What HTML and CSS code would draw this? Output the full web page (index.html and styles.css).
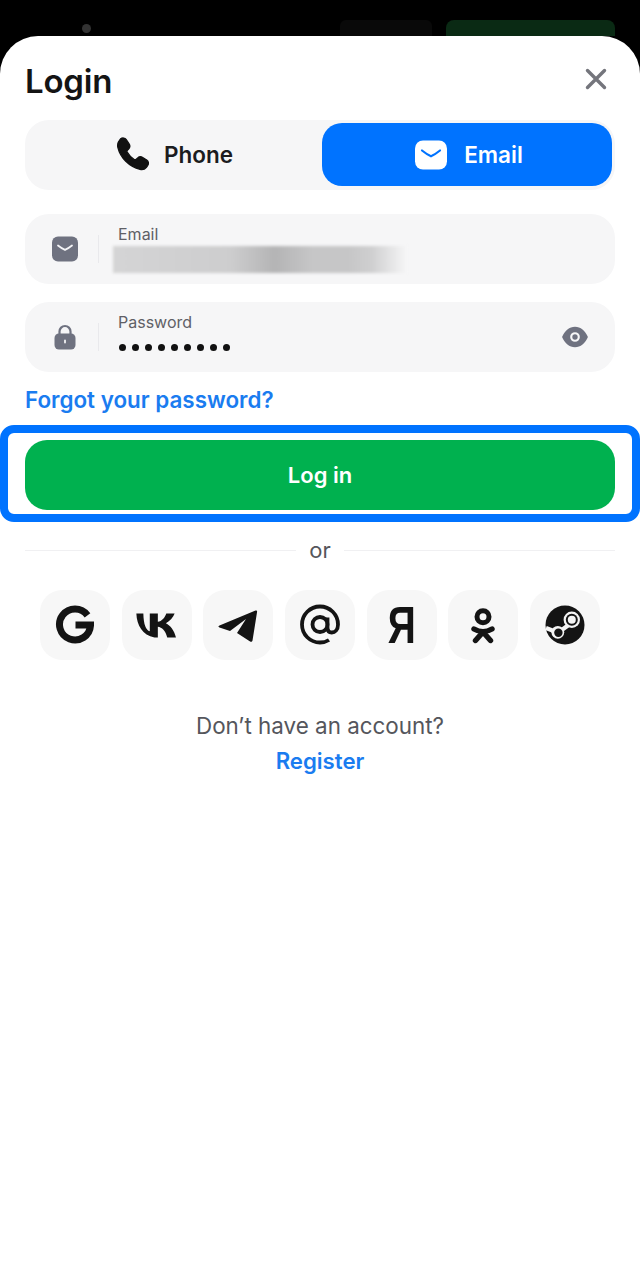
FILE: index.html
```html
<!DOCTYPE html>
<html lang="en">
<head>
    <meta charset="UTF-8">
    <meta name="viewport" content="width=device-width, initial-scale=1.0">
    <title>Login</title>
    <link rel="stylesheet" href="styles.css">
</head>
<body>
    <div class="backdrop">
        <span class="backdrop-dot"></span>
        <span class="backdrop-dark"></span>
        <span class="backdrop-green"></span>
    </div>

    <main class="sheet">
        <header class="sheet-head">
            <h1>Login</h1>
            <button class="close" aria-label="Close">
                <svg width="24" height="24" viewBox="0 0 24 24"><path d="M3.500 3.500l17 17M20.500 3.500l-17 17" stroke="#74757c" stroke-width="3.400" stroke-linecap="round" fill="none"/></svg>
            </button>
        </header>

        <div class="tabs">
            <button class="tab tab-phone">
                <svg width="36" height="36" viewBox="2 2 32 32"><path d="M7 3.600c1.600-1.100 3.900-.9 5 .8l2.500 3.800c.9 1.400.8 3.200-.4 4.400l-1.100 1.100c-.5.5-.6 1.200-.2 1.800 1.500 2.700 3.600 4.900 6.300 6.500.6.400 1.300.3 1.800-.2l1.300-1.200c1.200-1.100 3-1.300 4.400-.4l3.600 2.300c1.700 1.100 2 3.400.8 5l-1.100 1.400c-1.300 1.700-3.500 2.400-5.600 1.900C14.500 28.300 6.800 20.500 4.600 11.400 4.100 9.300 4.600 6.700 6 5z" fill="#111" stroke="#111" stroke-width="1.200" stroke-linejoin="round"/></svg>
                <span>Phone</span>
            </button>
            <button class="tab tab-active">
                <svg width="34" height="30" viewBox="0 0 34 30"><rect x="1" y="0.500" width="32" height="29" rx="8" fill="#fff"/><path d="M8 10.500c3 2.400 6 4.500 9 5.800 3-1.300 6-3.400 9-5.800" stroke="#0073ff" stroke-width="2.200" stroke-linecap="round" fill="none"/></svg>
                <span>Email</span>
            </button>
        </div>

        <div class="field">
            <div class="field-icon">
                <svg width="28" height="26" viewBox="0 0 28 26"><rect x="1" y="0.500" width="26" height="25" rx="6" fill="#6f7280"/><path d="M7 9.500c2.400 1.900 4.700 3.400 7 4.400 2.300-1 4.600-2.500 7-4.400" stroke="#f4f4f6" stroke-width="1.800" stroke-linecap="round" fill="none"/></svg>
            </div>
            <div class="field-body">
                <label>Email</label>
                <div class="blurred"></div>
            </div>
        </div>

        <div class="field">
            <div class="field-icon">
                <svg width="24" height="28" viewBox="0 0 24 28"><path d="M6.500 12V8.500a5.500 5.500 0 0 1 11 0V12" stroke="#6f7280" stroke-width="2.200" fill="none"/><rect x="1.500" y="10.500" width="21" height="16" rx="4.500" fill="#6f7280"/><rect x="11.100" y="16.500" width="1.800" height="4" rx=".9" fill="#f4f4f6"/></svg>
            </div>
            <div class="field-body">
                <label>Password</label>
                <div class="dots">
                    <i></i><i></i><i></i><i></i><i></i><i></i><i></i><i></i><i></i>
                </div>
            </div>
            <svg class="eye" width="28" height="24" viewBox="0 0 26 22"><path fill-rule="evenodd" d="M13 1.500c5.200 0 9.500 3.700 12 9.500-2.500 5.800-6.800 9.500-12 9.500S3.500 16.800 1 11C3.500 5.200 7.800 1.500 13 1.500zM13 6.500a4.500 4.500 0 1 0 0 9 4.500 4.500 0 0 0 0-9z" fill="#6f7280"/><circle cx="13" cy="11" r="2.500" fill="#6f7280"/></svg>
        </div>

        <a class="forgot" href="#">Forgot your password?</a>

        <div class="highlight">
            <button class="login">Log in</button>
        </div>

        <div class="divider"><span>or</span></div>

        <div class="socials">
            <a class="social" href="#">
                <svg width="40" height="40" viewBox="0 0 40 40"><path d="M32.500 10.300A15.500 15.500 0 1 0 35.500 20.500V20H20.500" stroke="#141414" stroke-width="7" fill="none"/></svg>
            </a>
            <a class="social" href="#">
                <svg width="47" height="47" viewBox="0 2 35 35"><path d="M2.500 10.500c.4 9 4.500 16 13.500 18h2.500v-8c3 .4 5.800 3 7 8h6.500c-1.300-5.500-4.200-9-7.500-10.700 3-1.800 5.500-4.400 6.500-7.300h-6.200c-1.100 3.200-3.400 5.800-6.300 6.200v-6.200h-6v13.300c-2.900-1-4.600-5-4.800-13.300z" fill="#141414"/></svg>
            </a>
            <a class="social" href="#">
                <svg width="40" height="40" viewBox="0 0 40 40"><path d="M1.500 20.500L37.500 5.500c1-.4 1.800.3 1.600 1.300L34.500 35.500c-.2 1.200-1.400 1.600-2.400 1L19 28l9-14-16 12-10.500-3.500c-1.400-.5-1.400-1.500 0-2z" fill="#141414"/></svg>
            </a>
            <a class="social" href="#">
                <svg width="42" height="42" viewBox="0 0 42 42"><circle cx="21" cy="20.500" r="7.500" stroke="#141414" stroke-width="3.800" fill="none"/><path d="M28.500 13.500v10c0 3.500 2 5 4.300 5 3 0 6.200-2.500 6.200-8 0-10-8-18-18-18S3 10.500 3 20.500 11 38.500 21 38.500c3.500 0 6.300-.8 9-2.500" stroke="#141414" stroke-width="3.800" fill="none"/></svg>
            </a>
            <a class="social" href="#"><span class="ya">Я</span></a>
            <a class="social" href="#">
                <svg width="40" height="40" viewBox="0 0 40 40"><circle cx="20" cy="11.700" r="6" stroke="#141414" stroke-width="5" fill="none"/><path d="M11 24c5.500 3.400 12.500 3.400 18 0M20 27l-7.500 8.500M20 27l7.500 8.500" stroke="#141414" stroke-width="5.400" stroke-linecap="round" fill="none"/></svg>
            </a>
            <a class="social" href="#">
                <svg width="40" height="40" viewBox="0 0 40 40"><circle cx="20" cy="20" r="19.500" fill="#141414"/><path d="M1 23l11 4.300M14 27l11-8" stroke="#f5f5f5" stroke-width="4.200" fill="none"/><circle cx="26.800" cy="14.700" r="8.200" fill="#f5f5f5"/><circle cx="26.800" cy="14.700" r="6" fill="#141414"/><circle cx="26.800" cy="14.700" r="4" fill="#f5f5f5"/><circle cx="12.800" cy="27.300" r="6.400" fill="#f5f5f5"/><circle cx="13.400" cy="27.800" r="4.200" fill="#141414"/></svg>
            </a>
        </div>

        <p class="no-account">Don’t have an account?</p>
        <a class="register" href="#">Register</a>
    </main>
</body>
</html>
```

FILE: styles.css
```css
* {
    box-sizing: border-box;
}
html, body {
    margin: 0;
    height: 1280px;
    overflow: hidden;
}
body {
    font-family: Inter, "Noto Sans", sans-serif;
    background-color: #000;
    color: #141414;
}
button {
    font-family: inherit;
    border: none;
    background: none;
    padding: 0;
}
a {
    text-decoration: none;
}

/* dimmed page behind the sheet */
.backdrop {
    height: 36px;
    display: flex;
    padding: 20px 25px 0 82px;
}
.backdrop-dot {
    width: 9px;
    height: 9px;
    margin-top: 4px;
    border-radius: 50%;
    background-color: #333;
}
.backdrop-dark {
    width: 92px;
    margin-left: 249px;
    border-radius: 6px 6px 0 0;
    background-color: #090909;
}
.backdrop-green {
    width: 169px;
    margin-left: 14px;
    border-radius: 8px 8px 0 0;
    background-color: #0a2a14;
}

.sheet {
    height: 1244px;
    background-color: #fff;
    border-radius: 38px 38px 0 0;
    padding: 0 25px;
    display: flex;
    flex-direction: column;
}
.sheet-head {
    height: 84px;
    display: flex;
    align-items: center;
    justify-content: space-between;
    padding-top: 6px;
    padding-right: 7px;
}
h1 {
    margin: 0;
    font-size: 33px;
    font-weight: 600;
    letter-spacing: -0.2px;
}
.close {
    display: flex;
    margin-top: -4px;
}

.tabs {
    height: 70px;
    display: flex;
    padding: 3px 3px 4px;
    background-color: #f6f6f7;
    border-radius: 24px;
}
.tab {
    flex: 1;
    display: flex;
    align-items: center;
    justify-content: center;
    gap: 15px;
    font-size: 22.500px;
    font-weight: 600;
    color: #1c1c1e;
    border-radius: 20px;
}
.tab-phone {
    gap: 13px;
    padding-right: 2px;
}
.tab-active {
    flex: 0 0 290px;
    gap: 16px;
    padding-left: 3px;
    background-color: #0073ff;
    color: #fff;
}

.field {
    height: 70px;
    margin-top: 24px;
    display: flex;
    align-items: center;
    background-color: #f6f6f7;
    border-radius: 24px;
    padding-right: 26px;
}
.field + .field {
    margin-top: 18px;
}
.field-icon {
    width: 74px;
    height: 28px;
    display: flex;
    align-items: center;
    justify-content: center;
    border-right: 1px solid #e9e9ec;
    padding-left: 6px;
}
.field-body {
    flex: 1;
    position: relative;
    padding-left: 19px;
    height: 100%;
}
.field-body label {
    display: block;
    margin-top: 10px;
    font-size: 16px;
    line-height: 20px;
    color: #5f6066;
}
.blurred {
    width: 294px;
    height: 27px;
    margin-left: -5px;
    margin-top: 2px;
    filter: blur(1.500px);
    background: linear-gradient(90deg, #d4d4d5 0%, #cdcdce 40%, #b4b4b5 55%, #c6c6c7 68%, #c6c6c7 80%, #cfcfd0 88%, #f6f6f7 100%);
}
.dots {
    display: flex;
    gap: 6px;
    margin-top: 12px;
    margin-left: 1px;
}
.dots i {
    width: 7px;
    height: 7px;
    background-color: #111;
    border-radius: 50%;
}
.eye {
    flex-shrink: 0;
}

.forgot {
    margin-top: 14px;
    height: 28px;
    line-height: 27px;
    font-size: 22.400px;
    font-weight: 600;
    color: #1a7cf0;
}

/* blue frame around the button, bleeds past the sheet padding */
.highlight {
    margin: 11px -25px 0;
    height: 97px;
    padding: 7px 17px 0;
    border: 8px solid #0073ff;
    border-radius: 14px;
}
.login {
    display: block;
    width: 100%;
    height: 70px;
    background-color: #00b14f;
    color: #fff;
    font-size: 22px;
    font-weight: 600;
    border-radius: 22px;
}

.divider {
    margin-top: 15px;
    height: 26px;
    display: flex;
    align-items: center;
    gap: 13px;
    font-size: 22px;
    color: #55565c;
}
.divider::before, .divider::after {
    content: "";
    flex: 1;
    height: 1px;
    background-color: #f0f0f2;
}

.socials {
    margin-top: 27px;
    padding: 0 15px;
    display: flex;
    justify-content: space-between;
}
.social {
    width: 70px;
    height: 70px;
    display: flex;
    align-items: center;
    justify-content: center;
    background-color: #f7f7f7;
    border-radius: 22px;
}
.ya {
    font-family: "Liberation Sans", sans-serif;
    font-size: 52px;
    font-weight: 700;
    color: #141414;
    transform: scaleX(0.75);
}

.no-account {
    margin: 52px 0 0;
    text-align: center;
    font-size: 22.400px;
    line-height: 28px;
    color: #55565c;
}
.register {
    margin-top: 7px;
    text-align: center;
    font-size: 22.200px;
    line-height: 28px;
    font-weight: 600;
    color: #1a7cf0;
}
```
